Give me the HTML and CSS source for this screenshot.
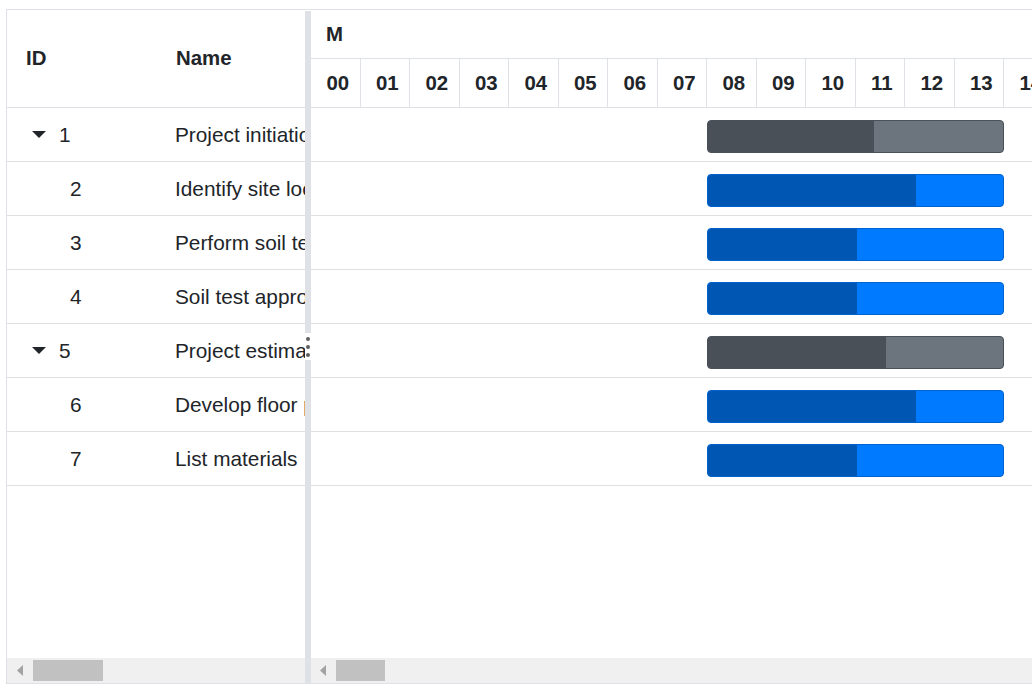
FILE: index.html
```html
<!DOCTYPE html>
<html>
<head>
<meta charset="utf-8">
<link rel="stylesheet" href="styles.css">
</head>
<body>
<div class="gantt">
  <div class="grid-pane">
    <div class="grid-header">
      <div class="col-id">ID</div>
      <div class="col-name">Name</div>
    </div>
    <div class="grid-body">
      <div class="grid-row">
        <div class="col-id"><svg class="expander" width="14" height="7" viewBox="0 0 14 7"><polygon points="0,0 14,0 7,7" fill="#212529"/></svg><span>1</span></div>
        <div class="col-name">Project initiation</div>
      </div>
      <div class="grid-row">
        <div class="col-id"><span class="indent"></span><span>2</span></div>
        <div class="col-name">Identify site location</div>
      </div>
      <div class="grid-row">
        <div class="col-id"><span class="indent"></span><span>3</span></div>
        <div class="col-name">Perform soil test</div>
      </div>
      <div class="grid-row">
        <div class="col-id"><span class="indent"></span><span>4</span></div>
        <div class="col-name">Soil test approval</div>
      </div>
      <div class="grid-row">
        <div class="col-id"><svg class="expander" width="14" height="7" viewBox="0 0 14 7"><polygon points="0,0 14,0 7,7" fill="#212529"/></svg><span>5</span></div>
        <div class="col-name">Project estimation</div>
      </div>
      <div class="grid-row">
        <div class="col-id"><span class="indent"></span><span>6</span></div>
        <div class="col-name">Develop floor plan for estimation</div>
      </div>
      <div class="grid-row">
        <div class="col-id"><span class="indent"></span><span>7</span></div>
        <div class="col-name">List materials</div>
      </div>
    </div>
    <div class="hscroll">
      <svg class="arrow arrow-left" width="6" height="11" viewBox="0 0 6 11"><polygon points="6,0 6,11 0,5.5" fill="#a3a3a3"/></svg>
      <div class="thumb thumb-left"></div>
    </div>
  </div>

  <div class="splitter">
    <div class="split-bar split-top"></div>
    <div class="split-handle"><span class="dot"></span><span class="dot"></span><span class="dot"></span></div>
    <div class="split-bar split-bottom"></div>
  </div>

  <div class="chart-pane">
    <div class="tl-top">M</div>
    <div class="tl-hours">
      <div class="tl-hour">00</div><div class="tl-hour">01</div><div class="tl-hour">02</div><div class="tl-hour">03</div>
      <div class="tl-hour">04</div><div class="tl-hour">05</div><div class="tl-hour">06</div><div class="tl-hour">07</div>
      <div class="tl-hour">08</div><div class="tl-hour">09</div><div class="tl-hour">10</div><div class="tl-hour">11</div>
      <div class="tl-hour">12</div><div class="tl-hour">13</div><div class="tl-hour">14</div><div class="tl-hour">15</div>
    </div>
    <div class="chart-body">
      <div class="tl-row"><div class="bar bar-parent" style="margin-left:396px;width:297px"><div class="progress" style="width:166px"></div></div></div>
      <div class="tl-row"><div class="bar bar-child" style="margin-left:396px;width:297px"><div class="progress" style="width:208px"></div></div></div>
      <div class="tl-row"><div class="bar bar-child" style="margin-left:396px;width:297px"><div class="progress" style="width:149px"></div></div></div>
      <div class="tl-row"><div class="bar bar-child" style="margin-left:396px;width:297px"><div class="progress" style="width:149px"></div></div></div>
      <div class="tl-row"><div class="bar bar-parent" style="margin-left:396px;width:297px"><div class="progress" style="width:178px"></div></div></div>
      <div class="tl-row"><div class="bar bar-child" style="margin-left:396px;width:297px"><div class="progress" style="width:208px"></div></div></div>
      <div class="tl-row"><div class="bar bar-child" style="margin-left:396px;width:297px"><div class="progress" style="width:149px"></div></div></div>
    </div>
    <div class="hscroll">
      <svg class="arrow arrow-right-pane" width="6" height="11" viewBox="0 0 6 11"><polygon points="6,0 6,11 0,5.5" fill="#a3a3a3"/></svg>
      <div class="thumb thumb-right"></div>
    </div>
  </div>
</div>
</body>
</html>
```
FILE: styles.css
```css
html, body {
  margin: 0;
  padding: 0;
  overflow: hidden;
  background: #fff;
}

body {
  font-family: "Liberation Sans", Arial, sans-serif;
  color: #212529;
  font-size: 20.8px;
}

.gantt {
  margin: 9px 0 0 6px;
  width: 1100px;
  height: 675px;
  box-sizing: border-box;
  border: 1px solid #dee2e6;
  display: flex;
}

/* ---------- left grid ---------- */
.grid-pane {
  width: 298px;
  flex: none;
  display: flex;
  flex-direction: column;
  overflow: hidden;
}

.grid-header {
  height: 98px;
  flex: none;
  box-sizing: border-box;
  border-bottom: 1px solid #dee2e6;
  display: flex;
  align-items: center;
  font-weight: bold;
  font-size: 20.4px;
}

.col-id {
  width: 149px;
  flex: none;
  box-sizing: border-box;
  padding-left: 19px;
}

.col-name {
  flex: none;
  padding-left: 20px;
  white-space: nowrap;
}

.grid-body {
  flex: 1;
}

.grid-row {
  height: 54px;
  box-sizing: border-box;
  border-bottom: 1px solid #e0e0e0;
  display: flex;
  align-items: center;
}

.grid-row .col-id {
  padding-left: 25px;
  display: flex;
  align-items: center;
}

.grid-row .col-name {
  padding-left: 19px;
}

.expander {
  display: block;
  flex: none;
  margin-right: 13px;
}

.indent {
  display: block;
  width: 38px;
  flex: none;
}

/* ---------- scrollbars ---------- */
.hscroll {
  height: 25px;
  flex: none;
  background: #f0f0f0;
  display: flex;
  align-items: center;
}

.arrow {
  display: block;
  flex: none;
}

.arrow-left {
  margin-left: 10px;
}

.arrow-right-pane {
  margin-left: 9px;
}

.thumb {
  height: 21px;
  background: #c1c1c1;
  flex: none;
  margin-left: 10px;
}

.thumb-left {
  width: 70px;
}

.thumb-right {
  width: 49px;
}

/* ---------- splitter ---------- */
.splitter {
  width: 6px;
  flex: none;
  margin-top: 1px;
  display: flex;
  flex-direction: column;
}

.split-bar {
  background: #dee2e6;
}

.split-top {
  height: 322px;
  flex: none;
}

.split-bottom {
  flex: 1;
}

.split-handle {
  height: 27px;
  flex: none;
  background: #fff;
  display: flex;
  flex-direction: column;
  align-items: center;
  justify-content: center;
  gap: 4px;
}

.dot {
  display: block;
  width: 4px;
  height: 4px;
  border-radius: 50%;
  background: #5f5f5f;
}

/* ---------- chart ---------- */
.chart-pane {
  flex: 1;
  min-width: 0;
  display: flex;
  flex-direction: column;
  overflow: hidden;
}

.tl-top {
  height: 49px;
  flex: none;
  box-sizing: border-box;
  border-bottom: 1px solid #dee2e6;
  padding-left: 15px;
  display: flex;
  align-items: center;
  font-weight: bold;
  font-size: 20.4px;
}

.tl-hours {
  height: 49px;
  flex: none;
  box-sizing: border-box;
  border-bottom: 1px solid #dee2e6;
  display: flex;
}

.tl-hour {
  width: 49.5px;
  flex: none;
  box-sizing: border-box;
  border-right: 1px solid #dee2e6;
  padding-left: 15.5px;
  display: flex;
  align-items: center;
  font-weight: bold;
  font-size: 20.4px;
  white-space: nowrap;
}

.chart-body {
  flex: 1;
}

.tl-row {
  height: 54px;
  box-sizing: border-box;
  border-bottom: 1px solid #e0e0e0;
  padding-top: 12px;
  display: flex;
  align-items: flex-start;
}

.bar {
  height: 33px;
  flex: none;
  box-sizing: border-box;
  border: 1px solid;
  border-radius: 4px;
  overflow: hidden;
  display: flex;
}

.bar .progress {
  height: 100%;
  flex: none;
}

.bar-parent {
  background: #6c757d;
  border-color: #4a5058;
}

.bar-parent .progress {
  background: #495057;
}

.bar-child {
  background: #007bff;
  border-color: #0062cc;
}

.bar-child .progress {
  background: #0056b3;
}
```
